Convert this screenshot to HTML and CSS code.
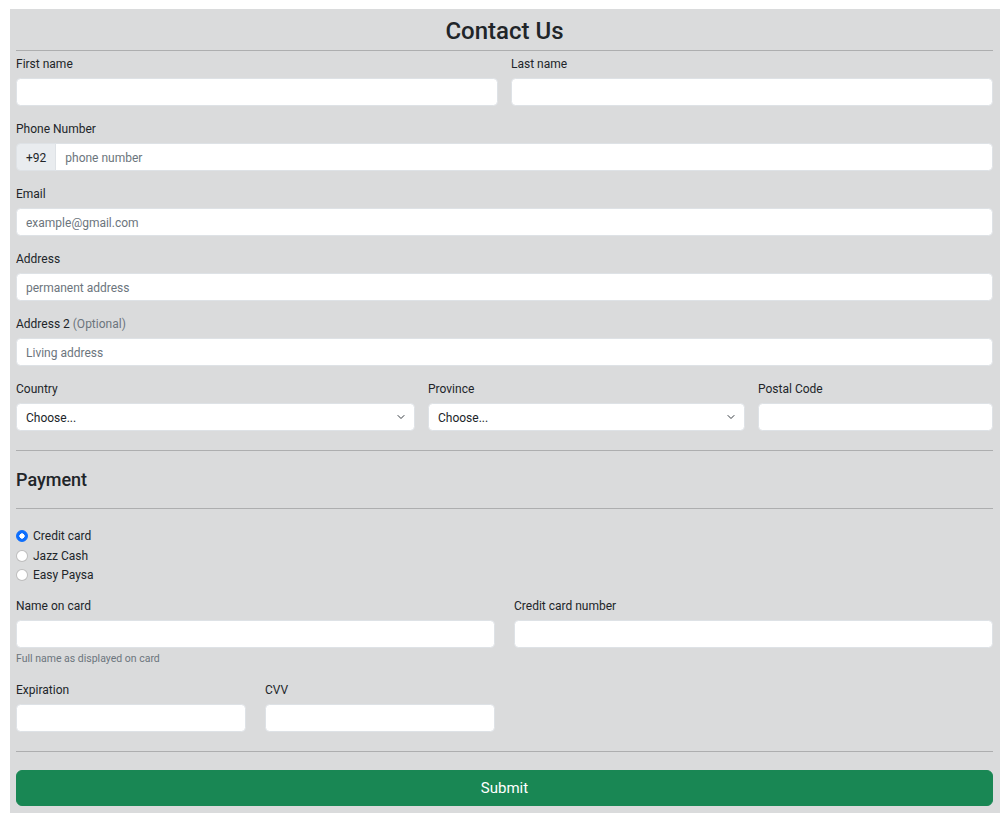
FILE: index.html
```html
<!DOCTYPE html>
<html lang="en">
<head>
<meta charset="utf-8">
<title>Contact Us</title>
<link rel="stylesheet" href="styles.css">
</head>
<body>
<div class="page">
  <h2 class="title">Contact Us</h2>
  <hr class="rule rule-head">
  <form class="form">
    <div class="grid grid-two">
      <div class="field"><label class="label">First name</label><input class="control" type="text"></div>
      <div class="field"><label class="label">Last name</label><input class="control" type="text"></div>
    </div>
    <div class="field">
      <label class="label">Phone Number</label>
      <div class="group">
        <span class="group-text">+92</span>
        <input class="control group-control" type="text" placeholder="phone number">
      </div>
    </div>
    <div class="field"><label class="label">Email</label><input class="control" type="email" placeholder="example@gmail.com"></div>
    <div class="field"><label class="label">Address</label><input class="control" type="text" placeholder="permanent address"></div>
    <div class="field"><label class="label">Address 2 <span class="muted">(Optional)</span></label><input class="control" type="text" placeholder="Living address"></div>
    <div class="grid grid-three">
      <div class="field"><label class="label">Country</label><select class="control select"><option>Choose...</option></select></div>
      <div class="field"><label class="label">Province</label><select class="control select"><option>Choose...</option></select></div>
      <div class="field"><label class="label">Postal Code</label><input class="control" type="text"></div>
    </div>
  </form>
  <hr class="rule rule-pay-top">
  <h4 class="subtitle">Payment</h4>
  <hr class="rule rule-pay-bottom">
  <div class="radios">
    <label class="radio"><input type="radio" name="pay" checked><span>Credit card</span></label>
    <label class="radio"><input type="radio" name="pay"><span>Jazz Cash</span></label>
    <label class="radio"><input type="radio" name="pay"><span>Easy Paysa</span></label>
  </div>
  <div class="grid grid-card">
    <div class="field"><label class="label">Name on card</label><input class="control" type="text"><small class="help">Full name as displayed on card</small></div>
    <div class="field"><label class="label">Credit card number</label><input class="control" type="text"></div>
  </div>
  <div class="grid grid-four">
    <div class="field"><label class="label">Expiration</label><input class="control" type="text"></div>
    <div class="field"><label class="label">CVV</label><input class="control" type="text"></div>
  </div>
  <hr class="rule rule-end">
  <button class="submit" type="button">Submit</button>
</div>
</body>
</html>
```

FILE: styles.css
```css
* { box-sizing: border-box; }

body {
  margin: 0;
  background: #ffffff;
  font-family: "Roboto", "Open Sans", sans-serif;
  font-size: 12px;
  line-height: 1.5;
  color: #212529;
}

.page {
  width: 990px;
  margin: 9px 0 0 10px;
  padding: 8px 7px 7px 6px;
  background: #dadbdc;
}

.title {
  margin: 0;
  font-size: 24px;
  line-height: 29px;
  font-weight: 500;
  text-align: center;
}

.rule {
  border: 0;
  border-top: 1px solid #adaeaf;
  margin: 0;
}
.rule-head { margin: 4px 0 3px; }
.rule-pay-top { margin: 19px 0 18px; }
.rule-pay-bottom { margin: 17px 0 18px; }
.rule-end { margin: 19px 0 18px; }

.form {
  display: flex;
  flex-direction: column;
  gap: 13px;
}

.grid { display: grid; column-gap: 13px; }
.grid-two { grid-template-columns: 1fr 1fr; }
.grid-three { grid-template-columns: 399fr 317fr 235fr; }
.grid-card { grid-template-columns: 1fr 1fr; column-gap: 19px; margin-top: 12px; }
.grid-four { grid-template-columns: 230px 230px 1fr; column-gap: 19px; margin-top: 13px; }

.field { display: flex; flex-direction: column; }

.label {
  display: block;
  line-height: 18px;
  padding-top: 1px;
  margin-bottom: 5px;
}
.muted { color: #6c757d; }

.control {
  display: block;
  width: 100%;
  height: 28px;
  padding: 1px 9px 0;
  font-family: inherit;
  font-size: 12px;
  color: #212529;
  background: #ffffff;
  border: 1px solid #dee2e6;
  border-radius: 4.5px;
  outline: none;
}
.control::placeholder { color: #6c757d; opacity: 1; }

.select {
  appearance: none;
  -webkit-appearance: none;
  padding-right: 28px;
  background-image: url("data:image/svg+xml,%3csvg xmlns='http://www.w3.org/2000/svg' viewBox='0 0 16 16'%3e%3cpath fill='none' stroke='%23343a40' stroke-linecap='round' stroke-linejoin='round' stroke-width='2' d='m2 5 6 6 6-6'/%3e%3c/svg%3e");
  background-repeat: no-repeat;
  background-position: right 8px center;
  background-size: 10px 8px;
}

.group { display: flex; }
.group-text {
  display: flex;
  align-items: center;
  height: 28px;
  padding: 1px 9px 0;
  background: #e9ecef;
  border: 1px solid #dee2e6;
  border-radius: 4.5px 0 0 4.5px;
  color: #212529;
}
.group-control {
  flex: 1;
  margin-left: -1px;
  border-radius: 0 4.5px 4.5px 0;
}

.subtitle {
  margin: 0;
  font-size: 18px;
  line-height: 22px;
  font-weight: 500;
}

.radios {
  display: flex;
  flex-direction: column;
  gap: 1.5px;
}
.radio {
  display: flex;
  align-items: center;
  gap: 5px;
  line-height: 18px;
}
.radio input {
  appearance: none;
  -webkit-appearance: none;
  width: 12px;
  height: 12px;
  margin: 0;
  border-radius: 50%;
  border: 1px solid rgba(0, 0, 0, 0.25);
  background: #ffffff;
}
.radio input:checked {
  border-color: #0d6efd;
  background: radial-gradient(circle, #ffffff 0 2.4px, #0d6efd 2.9px);
}

.help {
  margin-top: 3px;
  font-size: 10.5px;
  line-height: 15.75px;
  color: #6c757d;
}

.submit {
  display: block;
  width: 100%;
  height: 36px;
  padding: 0;
  border: 1px solid #198754;
  border-radius: 6px;
  background: #198754;
  color: #ffffff;
  font-family: inherit;
  font-size: 15px;
}
```
